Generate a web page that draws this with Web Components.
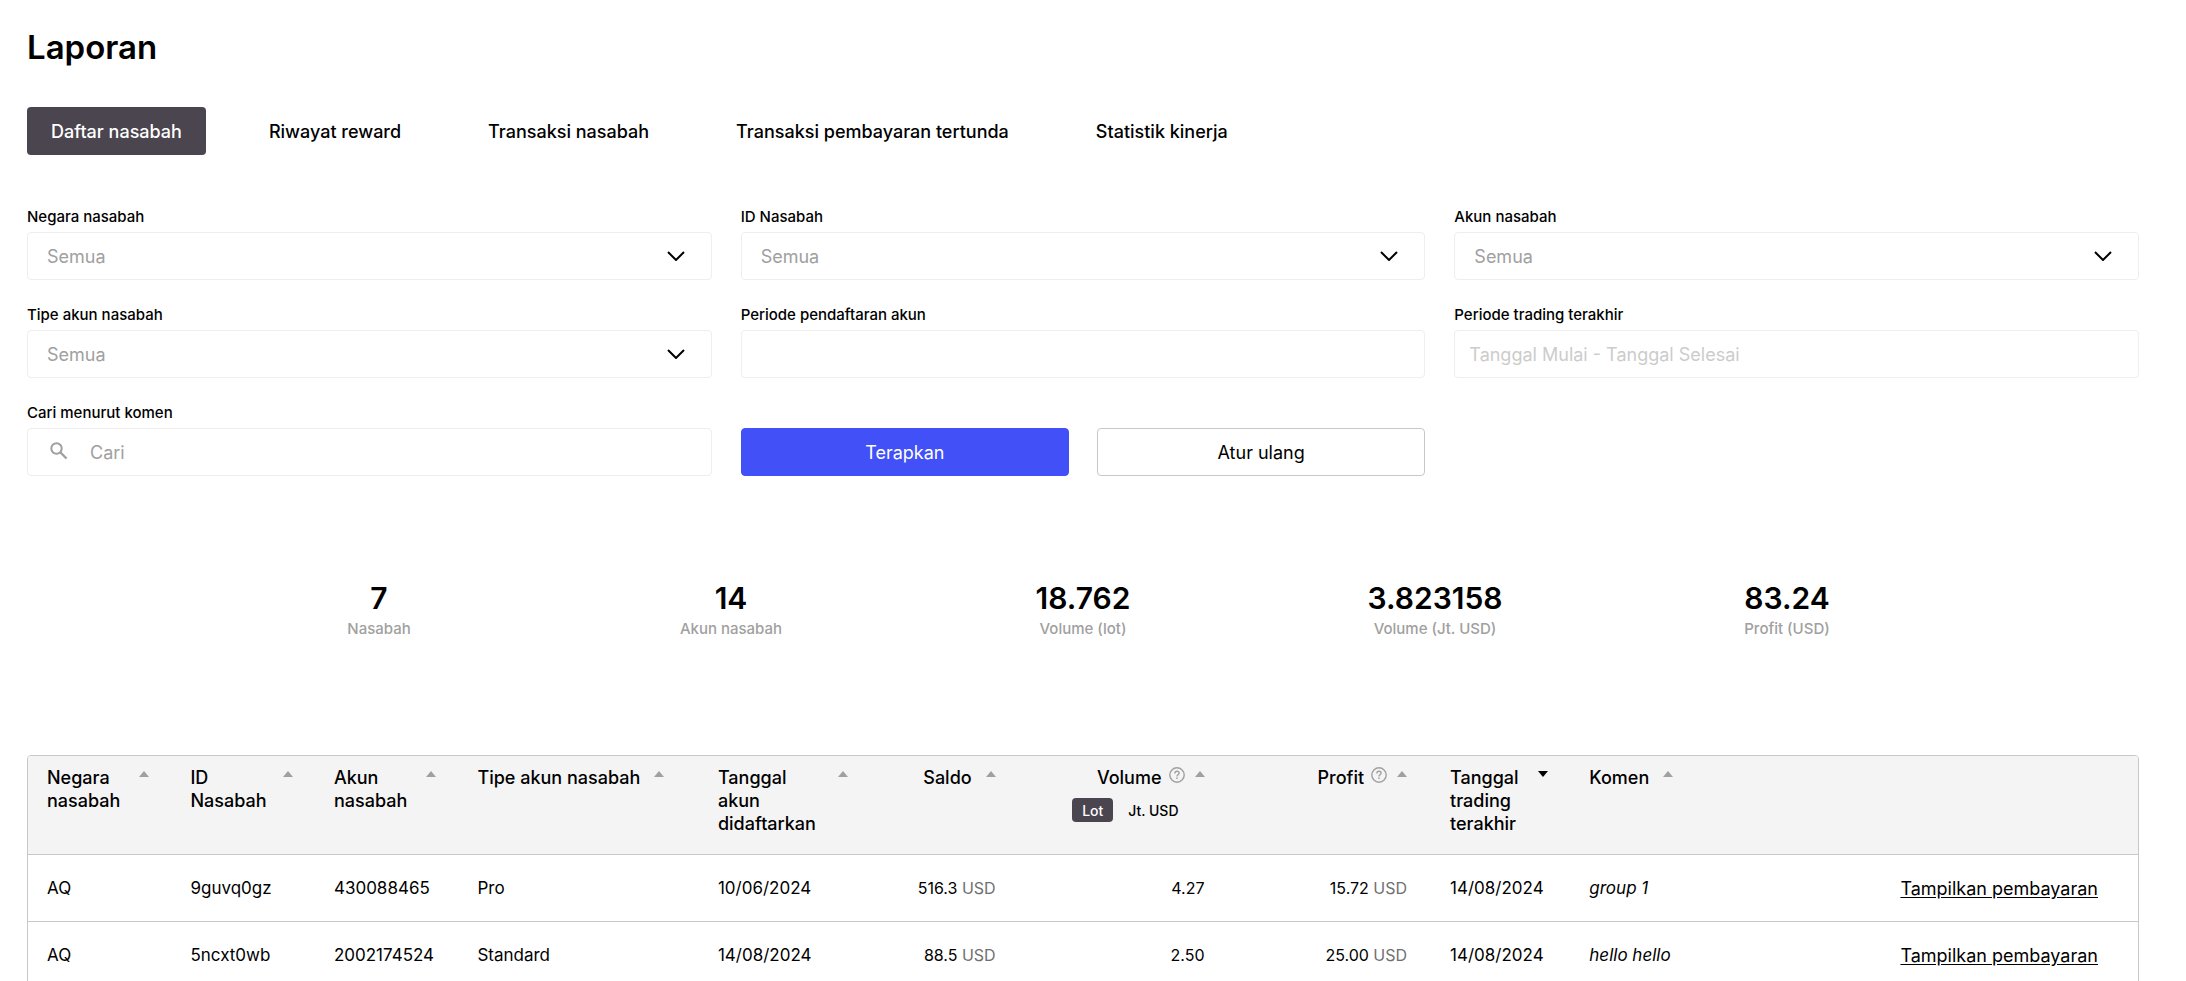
<!DOCTYPE html>
<html lang="id">
<head>
<meta charset="utf-8">
<title>Laporan</title>
<style>
  body { margin: 0; background: #fff; color: #000; font: 17px/23px Inter, "Liberation Sans", sans-serif; }
</style>
</head>
<body>
<report-page></report-page>

<script>
// Report sections
class ReportTabs extends HTMLElement {
  constructor() {
    super();
    this.attachShadow({ mode: 'open' });
    const tabs = ['Daftar nasabah', 'Riwayat reward', 'Transaksi nasabah', 'Transaksi pembayaran tertunda', 'Statistik kinerja'];

    this.shadowRoot.innerHTML = `
      <style>
        :host { display: block; }
        nav { display: flex; flex-wrap: wrap; gap: 39px; }
        button { height: 48px; padding: 0 24px; border: none; border-radius: 4px; background: none; color: inherit; font: inherit; font-size: 18px; font-weight: 500; cursor: pointer; }
        button.active { background: #4a454f; color: #fff; }
      </style>
      <nav>${tabs.map((t, i) => `<button type="button"${i === 0 ? ' class="active"' : ''}>${t}</button>`).join('')}</nav>
    `;
    this.shadowRoot.querySelectorAll('button').forEach(btn => {
      btn.onclick = () => {
        this.shadowRoot.querySelector('.active').classList.remove('active');
        btn.classList.add('active');
      };
    });
  }
}

const fieldStyles = `
  :host { display: block; }
  label { display: block; margin-bottom: 5px; font-size: 15px; line-height: 20px; font-weight: 500; }
  .box { display: grid; align-items: center; border: 1px solid #eee; border-radius: 4px; background: #fff; }
  .box > * { grid-row: 1; grid-column: 1; }
  select, input { width: 100%; height: 46px; box-sizing: border-box; margin: 0; border: none; background: none; font: inherit; font-size: 18px; outline: none; }
  svg { pointer-events: none; }
`;

class FilterSelect extends HTMLElement {
  constructor() {
    super();
    this.attachShadow({ mode: 'open' });
    this.shadowRoot.innerHTML = `
      <style>
        ${fieldStyles}
        select { appearance: none; padding: 0 60px 0 19px; color: #a0a0a0; }
        svg { justify-self: end; margin-right: 26px; }
      </style>
      <label for="field">${this.getAttribute('label')}</label>
      <div class="box">
        <select id="field"><option>Semua</option></select>
        <svg width="18" height="10" viewBox="0 0 18 10" fill="none" stroke="#000" stroke-width="2"><path d="M1 1l8 8 8-8"/></svg>
      </div>
    `;
  }
}

class FilterInput extends HTMLElement {
  constructor() {
    super();
    this.attachShadow({ mode: 'open' });
    const search = this.hasAttribute('search');
    this.shadowRoot.innerHTML = `
      <style>
        ${fieldStyles}
        input { padding: 0 14px; }
        input::placeholder { color: #ccc; opacity: 1; }
        input.search { padding-left: 62px; }
        input.search::placeholder { color: #a0a0a0; }
        svg { margin: 0 0 3px 22px; }
      </style>
      <label for="field">${this.getAttribute('label')}</label>
      <div class="box">
        <input id="field" type="text" placeholder="${this.getAttribute('placeholder') || ''}"${search ? ' class="search"' : ''}>
        ${search ? `<svg width="18" height="18" viewBox="0 0 18 18" fill="none" stroke="#a0a0a0" stroke-width="2"><circle cx="6.5" cy="6.5" r="5.2"/><path d="M10.5 10.5l6 6" stroke-width="2.4"/></svg>` : ''}
      </div>
    `;
  }
}

class ActionButton extends HTMLElement {
  constructor() {
    super();
    this.attachShadow({ mode: 'open' });
    this.shadowRoot.innerHTML = `
      <style>
        :host { display: block; }
        button { width: 100%; height: 48px; border: 1px solid #c8c8c8; border-radius: 4px; background: #fff; color: #000; font: inherit; font-size: 18px; cursor: pointer; }
        :host([primary]) button { border-color: #4150f7; background: #4150f7; color: #fff; }
      </style>
      <button type="button"><slot></slot></button>
    `;
  }
}

class StatItem extends HTMLElement {
  constructor() {
    super();
    this.attachShadow({ mode: 'open' });
    this.shadowRoot.innerHTML = `
      <style>
        :host { display: block; text-align: center; }
        .value { font-size: 30px; line-height: 40px; font-weight: 600; }
        .label { font-size: 15px; line-height: 22px; font-weight: 500; color: #a0a0a0; }
      </style>
      <div class="value">${this.getAttribute('value')}</div>
      <div class="label"><slot></slot></div>
    `;
  }
}

class ReportTable extends HTMLElement {
  constructor() {
    super();
    this.attachShadow({ mode: 'open' });

    // width is the share of the table, in percent
    const columns = [
      { title: 'Negara nasabah', width: 6.8 },
      { title: 'ID Nasabah', width: 6.8 },
      { title: 'Akun nasabah', width: 6.8 },
      { title: 'Tipe akun nasabah', width: 11.4 },
      { title: 'Tanggal akun didaftarkan', width: 8.1 },
      { title: 'Saldo', width: 7.1, num: true },
      { title: 'Volume', width: 9.9, num: true, help: true, units: true },
      { title: 'Profit', width: 9.6, num: true, help: true },
      { title: 'Tanggal trading terakhir', width: 6.6, sorted: true },
      { title: 'Komen', width: 9.7 },
      { title: '', width: 17.2 }
    ];
    const rows = [
      ['AQ', '9guvq0gz', '430088465', 'Pro', '10/06/2024', '516.3', '4.27', '15.72', '14/08/2024', 'group 1'],
      ['AQ', '5ncxt0wb', '2002174524', 'Standard', '14/08/2024', '88.5', '2.50', '25.00', '14/08/2024', 'hello hello']
    ];

    const help = '<svg class="help" width="16" height="16" viewBox="0 0 16 16" fill="none" stroke="#a0a0a0"><circle cx="8" cy="8" r="7.2" stroke-width="1.4"/><path d="M5.9 6.4c0-1.3.9-2.1 2.1-2.1s2.1.8 2.1 1.9c0 1.6-2.1 1.6-2.1 3.2" stroke-width="1.4"/><path d="M8 10.6v1.5" stroke-width="1.5"/></svg>';
    const arrow = sorted => `<button type="button" class="sort" aria-label="Urutkan"><svg width="10" height="6" viewBox="0 0 10 6"><path d="${sorted ? 'M0 0h10l-5 6z' : 'M0 6h10l-5-6z'}" fill="${sorted ? '#000' : '#a0a0a0'}"/></svg></button>`;
    const units = '<div class="units"><button type="button" class="active">Lot</button><button type="button">Jt. USD</button></div>';

    const head = columns.map(c => c.title ? `
      <th class="${c.num ? 'num' : ''}">
        <div class="head"><span>${c.title}</span>${c.help ? help : ''}${arrow(c.sorted)}</div>
        ${c.units ? units : ''}
      </th>` : '<th></th>').join('');

    const body = rows.map(r => `
      <tr>
        <td>${r[0]}</td><td>${r[1]}</td><td>${r[2]}</td><td>${r[3]}</td><td>${r[4]}</td>
        <td class="num">${r[5]} <span class="currency">USD</span></td>
        <td class="num">${r[6]}</td>
        <td class="num">${r[7]} <span class="currency">USD</span></td>
        <td>${r[8]}</td>
        <td><em>${r[9]}</em></td>
        <td class="action"><a href="#">Tampilkan pembayaran</a></td>
      </tr>`).join('');

    this.shadowRoot.innerHTML = `
      <style>
        :host { display: block; border: 1px solid #c8c8c8; border-radius: 4px; overflow: hidden; }
        table { width: 100%; table-layout: fixed; border-collapse: collapse; }
        th, td { padding: 0 22px 0 19px; text-align: left; white-space: nowrap; }
        th { padding-top: 10px; padding-bottom: 19px; vertical-align: top; font-weight: 500; font-size: 18px; background: #f4f4f4; white-space: normal; }
        td { height: 66px; border-top: 1px solid #c8c8c8; font-size: 17px; }
        .num { text-align: right; padding-right: 24px; }
        td.num { font-size: 16px; }
        .head { display: flex; align-items: flex-start; gap: 14px; }
        .num .head { justify-content: flex-end; }
        .sort { display: flex; flex: none; margin: 5px 0 0; padding: 0; border: none; background: none; cursor: pointer; }
        .help { flex: none; margin: 1px -4px 0 -7px; }
        .units { display: flex; justify-content: flex-end; gap: 5px; margin: 9px 16px 0 0; }
        .units button { height: 24px; padding: 0 10px; border: none; border-radius: 4px; background: none; color: inherit; font: inherit; font-size: 14px; font-weight: 500; cursor: pointer; }
        .units .active { background: #4a454f; color: #fff; }
        .currency { color: #707070; }
        .action { text-align: right; padding-right: 40px; font-size: 18px; }
        a { color: inherit; text-underline-offset: 2px; }
      </style>
      <table>
        <colgroup>${columns.map(c => `<col style="width: ${c.width}%">`).join('')}</colgroup>
        <thead><tr>${head}</tr></thead>
        <tbody>${body}</tbody>
      </table>
    `;
  }
}

class ReportPage extends HTMLElement {
  constructor() {
    super();
    this.attachShadow({ mode: 'open' });
    this.shadowRoot.innerHTML = `
      <style>
        :host { display: block; padding: 27px 47px 0 27px; }
        h1 { margin: 0 0 40px; font-size: 33px; line-height: 40px; font-weight: 600; }
        .filters { display: grid; grid-template-columns: repeat(3, 1fr); gap: 25px 29px; margin-top: 52px; }
        .actions { display: grid; grid-template-columns: 1fr 1fr; gap: 28px; align-items: end; }
        .stats { display: flex; justify-content: center; margin: 102px 0 115px; }
        .stats stat-item { flex: 0 0 calc(100% / 6); }
      </style>
      <h1>Laporan</h1>
      <report-tabs></report-tabs>
      <div class="filters">
        <filter-select label="Negara nasabah"></filter-select>
        <filter-select label="ID Nasabah"></filter-select>
        <filter-select label="Akun nasabah"></filter-select>
        <filter-select label="Tipe akun nasabah"></filter-select>
        <filter-input label="Periode pendaftaran akun"></filter-input>
        <filter-input label="Periode trading terakhir" placeholder="Tanggal Mulai - Tanggal Selesai"></filter-input>
        <filter-input label="Cari menurut komen" placeholder="Cari" search></filter-input>
        <div class="actions">
          <action-button primary>Terapkan</action-button>
          <action-button>Atur ulang</action-button>
        </div>
      </div>
      <div class="stats">
        <stat-item value="7">Nasabah</stat-item>
        <stat-item value="14">Akun nasabah</stat-item>
        <stat-item value="18.762">Volume (lot)</stat-item>
        <stat-item value="3.823158">Volume (Jt. USD)</stat-item>
        <stat-item value="83.24">Profit (USD)</stat-item>
      </div>
      <report-table></report-table>
    `;
  }
}

customElements.define('report-tabs', ReportTabs);
customElements.define('filter-select', FilterSelect);
customElements.define('filter-input', FilterInput);
customElements.define('action-button', ActionButton);
customElements.define('stat-item', StatItem);
customElements.define('report-table', ReportTable);
customElements.define('report-page', ReportPage);
</script>
</body>
</html>
